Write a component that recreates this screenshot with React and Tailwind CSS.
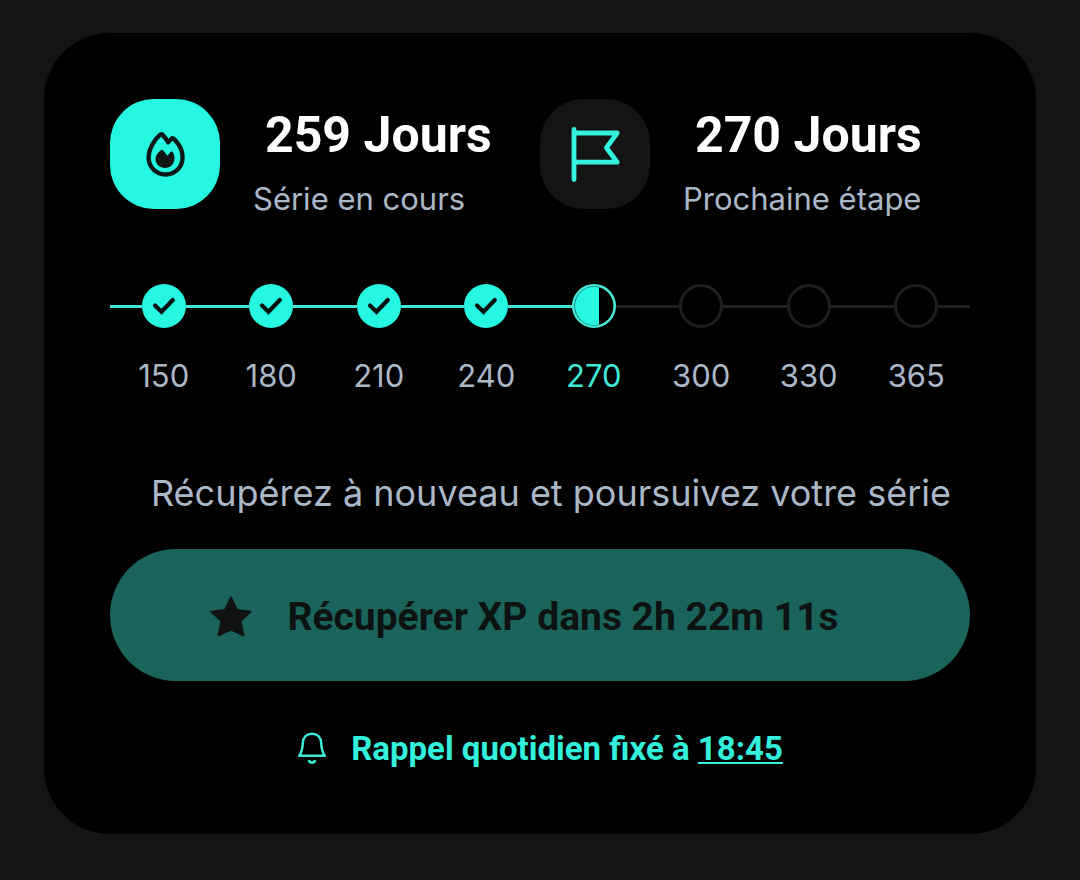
const milestones = [
  { day: 150, state: 'done' },
  { day: 180, state: 'done' },
  { day: 210, state: 'done' },
  { day: 240, state: 'done' },
  { day: 270, state: 'current' },
  { day: 300, state: 'todo' },
  { day: 330, state: 'todo' },
  { day: 365, state: 'todo' },
];

function FlameIcon() {
  return (
    <svg aria-hidden="true" className="h-[70px] w-[60px]" viewBox="0 0 60 70">
      <path
        d="M25 14.900c1-.8 2-.6 2.800.2 2.200 2.200 3.900 4.700 5.400 7.200 1.100-1.200 1.800-2.200 3-3.300 1-.9 2.100-.8 3 .1 4.700 4.700 8.400 12.100 8.400 18.200 0 9.800-7.400 17.200-17 17.200s-17-7.400-17-17.200c0-7.900 4.900-16.800 11.400-22.400z"
        fill="none"
        stroke="#0b1918"
        strokeWidth="4.400"
        strokeLinejoin="round"
      />
      <path
        d="M26.200 30c.6-.5 1.300-.3 1.800.2 1.700 1.700 3 3.500 4.300 5.600l3.300-3.800c.6-.7 1.500-.6 2 .1 1.300 1.700 1.900 4 1.900 6 0 6-4.100 10-9.400 10-5.500 0-9.600-4-9.600-9.300 0-3.500 2.400-6.400 5.700-8.800z"
        fill="#111514"
      />
    </svg>
  );
}

function FlagIcon() {
  return (
    <svg
      aria-hidden="true"
      className="h-[60px] w-[60px]"
      viewBox="0 0 60 60"
      fill="none"
      stroke="#33f2de"
      strokeWidth="4.800"
      strokeLinecap="round"
      strokeLinejoin="round"
    >
      <path d="M9 4.500v50M9 8h43.200L41.500 22.700l10.700 14.500H9" />
    </svg>
  );
}

function StarIcon() {
  return (
    <svg aria-hidden="true" className="h-[44px] w-[44px]" viewBox="0 0 44 44" fill="#101312" stroke="#101312" strokeWidth="2" strokeLinejoin="round">
      <path d="M22 2.500l5.900 12.500 13.600 1.700-10.100 9.300 3.100 14.300L22 34.600 9.500 40.300 12.600 26 2.500 16.700 16.100 15z" />
    </svg>
  );
}

function BellIcon() {
  return (
    <svg aria-hidden="true" className="h-[34px] w-[30px]" viewBox="0 0 30 34" fill="none" stroke="#3fe9d8" strokeWidth="2.500" strokeLinecap="round" strokeLinejoin="round">
      <path d="M2.200 23.700h25.600c-3-3.800-3.300-7-3.600-12.500C23.900 5 20.200 1.700 15 1.700S6.100 5 5.800 11.200c-.3 5.500-.6 8.700-3.600 12.500z" />
      <path d="M12.200 29.200c1.500 2 4.100 2 5.600 0" strokeWidth="2.800" />
    </svg>
  );
}

function Marker({ state }) {
  if (state === 'done') {
    return (
      <svg aria-hidden="true" className="h-11 w-11 shrink-0" viewBox="0 0 44 44">
        <circle cx="22" cy="22" r="22" fill="#26f7e1" />
        <path d="M13 21.500l6.500 6.300L30.800 16" fill="none" stroke="#061110" strokeWidth="4.200" strokeLinecap="round" />
      </svg>
    );
  }
  if (state === 'current') {
    return (
      <svg aria-hidden="true" className="h-11 w-11 shrink-0" viewBox="0 0 44 44">
        <path d="M27 2.700A19.800 19.800 0 1 0 27 41.300z" fill="#26f7e1" />
        <circle cx="22" cy="22" r="20.700" fill="none" stroke="#45ead9" strokeWidth="2.600" />
        <path d="M27 3A19.600 19.600 0 1 0 27 41" fill="none" stroke="#137c71" strokeWidth=".5" />
      </svg>
    );
  }
  return <span className="h-11 w-11 shrink-0 rounded-full border-[3px] border-[#1f1f1f]" />;
}

function Milestone({ day, state }) {
  const before = state === 'todo' ? 'bg-[#222222]' : 'bg-[#3fe6d5]';
  const after = state === 'done' ? 'bg-[#3fe6d5]' : 'bg-[#222222]';
  return (
    <li className="flex flex-col gap-7">
      <div className="flex items-center">
        <span className={`h-[3px] flex-1 ${before}`} />
        <Marker state={state} />
        <span className={`h-[3px] flex-1 ${after}`} />
      </div>
      <span className={`text-center text-[31px] leading-10 ${state === 'current' ? 'text-[#3fe9d8]' : 'text-[#abb8c7]'}`}>
        {day}
      </span>
    </li>
  );
}

function Stat({ icon, tile, value, label }) {
  return (
    <div className="flex items-start gap-[33px]">
      <div className={`flex h-[110px] w-[110px] shrink-0 items-center justify-center rounded-[44px] pt-0.5 ${tile}`}>{icon}</div>
      <div className="flex flex-col gap-2 whitespace-nowrap">
        <strong className="pl-3 font-['Roboto',sans-serif] text-[50px] leading-[72px] font-bold text-white">{value}</strong>
        <span className="text-[31px] leading-10 text-[#abb8c7]">{label}</span>
      </div>
    </div>
  );
}

export default function App() {
  return (
    <main className="min-h-screen bg-[#141414] px-11 py-[33px] font-['Inter',sans-serif] font-normal">
      <section className="rounded-[66px] bg-black px-[66px] pt-[66px] pb-[61px]">
        <div className="grid grid-cols-2">
          <Stat icon={<FlameIcon />} tile="bg-[#26f7e1]" value="259 Jours" label="Série en cours" />
          <Stat icon={<FlagIcon />} tile="bg-[#141414]" value="270 Jours" label="Prochaine étape" />
        </div>

        <ol className="mt-[65px] grid grid-cols-8">
          {milestones.map((m) => (
            <Milestone key={m.day} day={m.day} state={m.state} />
          ))}
        </ol>

        <p className="mt-[73px] pl-[22px] text-center text-[36px] leading-[48px] whitespace-nowrap text-[#abb8c7]">
          Récupérez à nouveau et poursuivez votre série
        </p>

        <button
          type="button"
          disabled
          className="mt-8 flex h-[132px] w-full items-center justify-center gap-[34px] rounded-full bg-[#1b645b] pt-1 pr-8 font-['Roboto',sans-serif] text-[39px] leading-[48px] font-bold text-[#0d1312]"
        >
          <StarIcon />
          Récupérer XP dans 2h 22m 11s
        </button>

        <div className="mt-11 flex items-center justify-center gap-6 font-['Roboto',sans-serif] text-[33px] leading-[48px] font-bold text-[#33f0dc]">
          <BellIcon />
          <p>
            Rappel quotidien fixé à{' '}
            <a href="#rappel" className="underline decoration-2 underline-offset-2">
              18:45
            </a>
          </p>
        </div>
      </section>
    </main>
  );
}
